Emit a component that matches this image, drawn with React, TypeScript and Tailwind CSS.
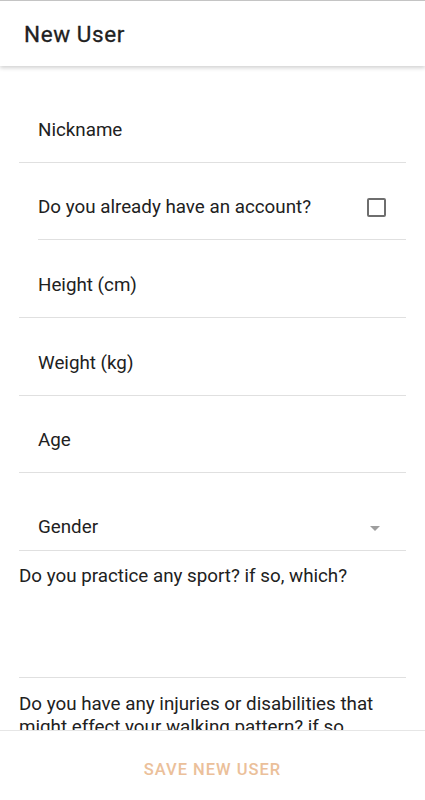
import React from 'react'

const font = { fontFamily: 'Roboto, "Noto Sans", sans-serif' }

function Field({ label, pad = 'pt-[32.5px] pb-[20.5px]' }: { label: string; pad?: string }) {
  return (
    <div className={`border-b border-[#e0e0e0] ${pad}`}>
      <div className="pl-[19px] text-[18.8px] leading-6 text-[#212121]">{label}</div>
    </div>
  )
}

export default function App() {
  return (
    <div className="flex flex-col h-screen overflow-hidden bg-white" style={font}>
      {/* Header */}
      <header className="h-[66px] border-t border-[#c4c4c4] flex items-center px-6 bg-white shadow-[0_2px_4px_rgba(0,0,0,0.18)] relative z-10 flex-shrink-0">
        <h1 className="text-[22.5px] font-normal text-[#212121] tracking-[0.6px] mt-[2px] [-webkit-text-stroke:0.3px_#212121]">New User</h1>
      </header>

      {/* Form */}
      <main className="flex-1 overflow-hidden px-[19px]">
        <div className="border-b border-[#e0e0e0] pt-[52px] pb-5">
          <div className="pl-[19px] text-[18.8px] leading-6 text-[#212121]">Nickname</div>
        </div>

        <div className="ml-[19px] border-b border-[#e0e0e0] pt-8 pb-5 pr-5 flex items-center justify-between">
          <span className="text-[18.8px] leading-6 text-[#212121]">Do you already have an account?</span>
          <span className="w-[19px] h-[19px] border-2 border-[#6e6e6e] rounded-[2px]" />
        </div>

        <Field label="Height (cm)" />
        <Field label="Weight (kg)" />
        <Field label="Age" pad="pt-8 pb-5" />

        <div className="border-b border-[#e0e0e0] pt-[42px] pb-[11px] pl-[19px] pr-[26px] flex items-center justify-between">
          <span className="text-[18.8px] leading-6 text-[#212121]">Gender</span>
          <svg width="10" height="5" viewBox="0 0 10 5" className="mt-[2px]">
            <path d="M0 0 L10 0 L5 5 Z" fill="#9e9e9e" />
          </svg>
        </div>

        <div className="border-b border-[#e0e0e0] pt-[13px] h-[127px]">
          <div className="text-[18.8px] leading-6 text-[#212121]">Do you practice any sport? if so, which?</div>
        </div>

        <div className="pt-[15px] text-[18.8px] leading-[23px] text-[#212121]">
          Do you have any injuries or disabilities that might effect your walking pattern? if so, which?
        </div>
      </main>

      {/* Footer */}
      <footer className="h-[70px] border-t border-[#e6e6e6] bg-white flex items-center justify-center flex-shrink-0">
        <button className="text-[16.5px] font-medium uppercase tracking-[1px] text-[#ebc09a] mt-[10px]">
          Save new user
        </button>
      </footer>
    </div>
  )
}
